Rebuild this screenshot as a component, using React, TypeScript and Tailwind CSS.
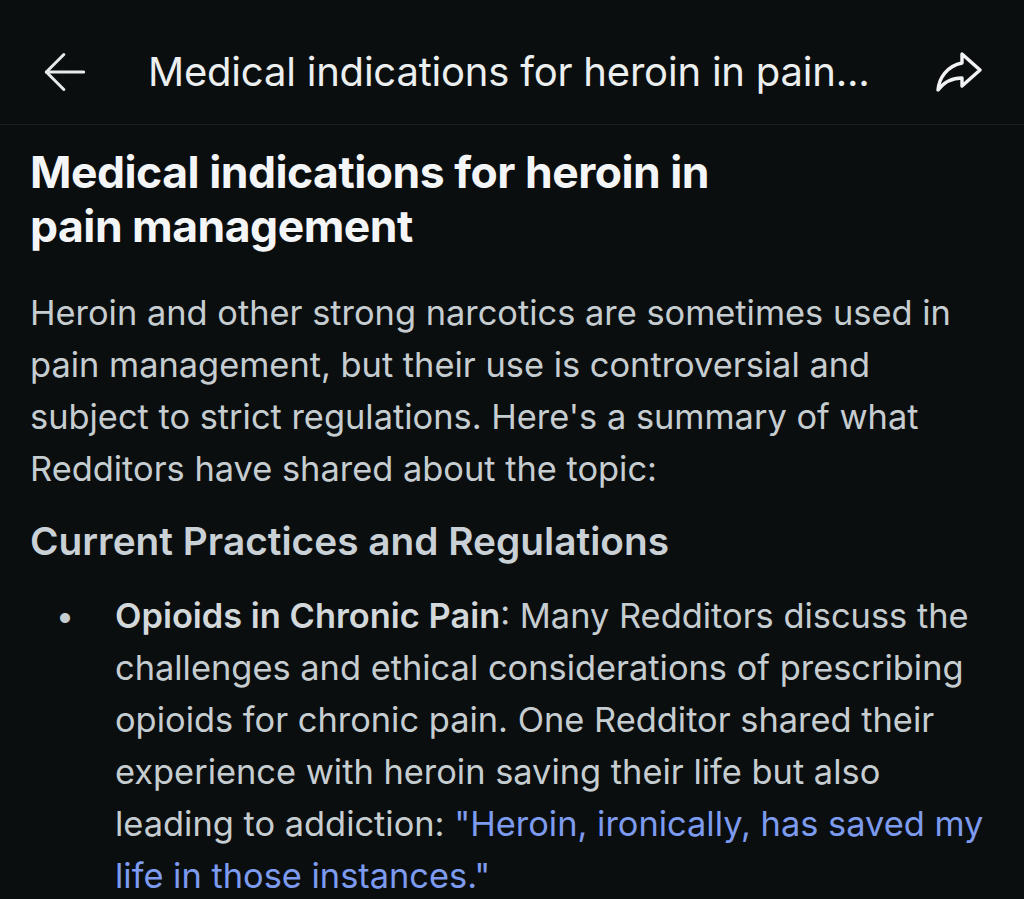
import React from "react";

function BackIcon() {
  return (
    <svg width="56" height="56" viewBox="0 0 24 24" fill="none" stroke="#e8ebed" strokeWidth="1.3" strokeLinecap="round" strokeLinejoin="round">
      <path d="M20 12H4" />
      <path d="M11.5 4.5L4 12l7.5 7.5" />
    </svg>
  );
}

function ShareIcon() {
  return (
    <svg width="48" height="44" viewBox="0 0 48 44" fill="none" stroke="#f1f3f4" strokeWidth="3.4" strokeLinejoin="round" strokeLinecap="round">
      <path d="M28 4L46 20L28 36V28C18 28 10 32 4 40C5 28 13 16 28 13Z" />
    </svg>
  );
}

export default function App() {
  return (
    <div
      className="min-h-[899px] w-full bg-[#0b0e0f] text-[#c6cdd1]"
      style={{ fontFamily: "Inter, 'Noto Sans', sans-serif" }}
    >
      <header className="flex h-[125px] items-center border-b border-[#1a1f21] pl-[37px] pr-[42px] pt-[20px]">
        <BackIcon />
        <h1 className="ml-[55px] flex-1 truncate text-[40px] font-normal leading-[52px] tracking-[-0.2px] text-[#eceff0]">
          Medical indications for heroin in pain...
        </h1>
        <ShareIcon />
      </header>

      <main className="px-[30px] pt-[20px]">
        <h2 className="text-[44.5px] font-bold leading-[54px] tracking-[-0.5px] text-[#f3f5f6]">
          Medical indications for heroin in
          <br />
          pain management
        </h2>

        <p className="mt-[34px] text-[34.4px] leading-[52px]">
          Heroin and other strong narcotics are sometimes used in pain management, but their use is
          controversial and subject to strict regulations. Here's a summary of what Redditors have
          shared about the topic:
        </p>

        <h3 className="mt-[20px] text-[38.8px] font-semibold leading-[52px] text-[#c9d1d6]">
          Current Practices and Regulations
        </h3>

        <ul className="mt-[23px]">
          <li className="flex">
            <span className="w-[85px] shrink-0 pl-[26px] text-[32px] leading-[52px]">•</span>
            <p className="text-[34.4px] leading-[52px]">
              <span className="font-semibold text-[#d3d8db]">Opioids in Chronic Pain</span>: Many
              Redditors discuss the challenges and ethical considerations of prescribing opioids for
              chronic pain. One Redditor shared their experience with heroin saving their life but
              also leading to addiction:{" "}
              <span className="text-[#7d9bef]">"Heroin, ironically, has saved my life in those instances."</span>
            </p>
          </li>
        </ul>
      </main>
    </div>
  );
}
